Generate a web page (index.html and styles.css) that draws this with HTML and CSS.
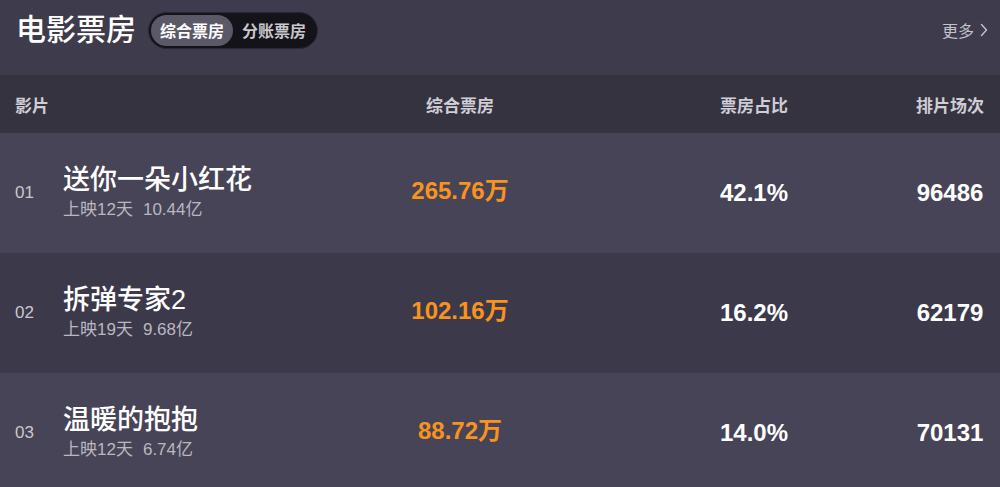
FILE: index.html
```html
<!DOCTYPE html>
<html lang="zh-CN">
<head>
<meta charset="utf-8">
<title>电影票房</title>
<link rel="stylesheet" href="styles.css">
</head>
<body>
<div class="page">
  <header class="top">
    <div class="top-left">
      <h1 class="title">电影票房</h1>
      <div class="toggle">
        <span class="seg active">综合票房</span>
        <span class="seg">分账票房</span>
      </div>
    </div>
    <a class="more">更多<svg class="chev" width="8" height="14" viewBox="0 0 8 14"><path d="M1.5 1.5 L6.5 7 L1.5 12.5" fill="none" stroke="#c4c2cc" stroke-width="1.4" stroke-linecap="round" stroke-linejoin="round"/></svg></a>
  </header>
  <div class="table">
    <div class="row head">
      <div class="c-film">影片</div>
      <div class="c-mid">综合票房</div>
      <div class="c-mid">票房占比</div>
      <div class="c-mid">排片场次</div>
    </div>
    <div class="row item odd">
      <div class="c-film">
        <span class="rank">01</span>
        <div class="info">
          <div class="name">送你一朵小红花</div>
          <div class="sub"><span>上映12天</span><span>10.44亿</span></div>
        </div>
      </div>
      <div class="c-mid box">265.76万</div>
      <div class="c-mid ratio">42.1%</div>
      <div class="c-mid count">96486</div>
    </div>
    <div class="row item even">
      <div class="c-film">
        <span class="rank">02</span>
        <div class="info">
          <div class="name">拆弹专家2</div>
          <div class="sub"><span>上映19天</span><span>9.68亿</span></div>
        </div>
      </div>
      <div class="c-mid box">102.16万</div>
      <div class="c-mid ratio">16.2%</div>
      <div class="c-mid count">62179</div>
    </div>
    <div class="row item odd">
      <div class="c-film">
        <span class="rank">03</span>
        <div class="info">
          <div class="name">温暖的抱抱</div>
          <div class="sub"><span>上映12天</span><span>6.74亿</span></div>
        </div>
      </div>
      <div class="c-mid box">88.72万</div>
      <div class="c-mid ratio">14.0%</div>
      <div class="c-mid count">70131</div>
    </div>
  </div>
</div>
</body>
</html>
```

FILE: styles.css
```css
* { box-sizing: border-box; }
html, body { margin: 0; padding: 0; }
body {
  width: 1000px;
  height: 487px;
  overflow: hidden;
  background: #3e3b4c;
  font-family: "Liberation Sans", "Noto Sans CJK SC", sans-serif;
  color: #fff;
}
.page { width: 1000px; }
.top {
  height: 75px;
  display: flex;
  align-items: center;
  justify-content: space-between;
  padding: 0 12px 15px 16px;
  background: #3e3b4c;
}
.top-left { display: flex; align-items: center; gap: 12px; }
.title {
  margin: 0;
  font-size: 30px;
  font-weight: 500;
  color: #fff;
  line-height: 1;
}
.toggle {
  display: flex;
  align-items: center;
  height: 37px;
  padding: 2px;
  border-radius: 19px;
  background: #15131a;
  border: 1px solid #2b2833;
}
.seg {
  display: flex;
  align-items: center;
  height: 31px;
  padding: 0 9px;
  border-radius: 16px;
  font-size: 16px;
  font-weight: 700;
  color: #c9c8cf;
}
.seg.active {
  background: #5b5867;
  color: #fff;
}
.more {
  display: flex;
  align-items: center;
  gap: 6px;
  font-size: 16px;
  color: #c4c2cc;
}
.table { width: 1000px; }
.row {
  display: grid;
  grid-template-columns: 312px 296px 292px 100px;
  align-items: center;
}
.c-mid { text-align: center; white-space: nowrap; }
.head {
  height: 58px;
  background: #363341;
  font-size: 17px;
  font-weight: 700;
  color: #cfcdd6;
}
.head .c-film { padding-left: 15px; }
.item { height: 120px; }
.odd { background: #474457; }
.even { background: #3c394a; }
.item .c-film {
  display: flex;
  align-items: center;
  padding-left: 15px;
}
.rank {
  width: 48px;
  font-size: 17px;
  color: #c8c7cf;
}
.info { display: flex; flex-direction: column; margin-top: -1px; }
.name {
  font-size: 27px;
  font-weight: 500;
  color: #fff;
  line-height: 32px;
}
.sub {
  display: flex;
  gap: 10px;
  font-size: 17px;
  color: #b9b8c0;
  line-height: 22px;
  margin-top: 3px;
}
.box {
  font-size: 24px;
  font-weight: 700;
  color: #f7931e;
  line-height: 28px;
  margin-top: -5px;
}
.ratio {
  font-size: 24px;
  font-weight: 700;
  color: #fff;
}
.count {
  font-size: 24px;
  font-weight: 700;
  color: #fff;
}
```
